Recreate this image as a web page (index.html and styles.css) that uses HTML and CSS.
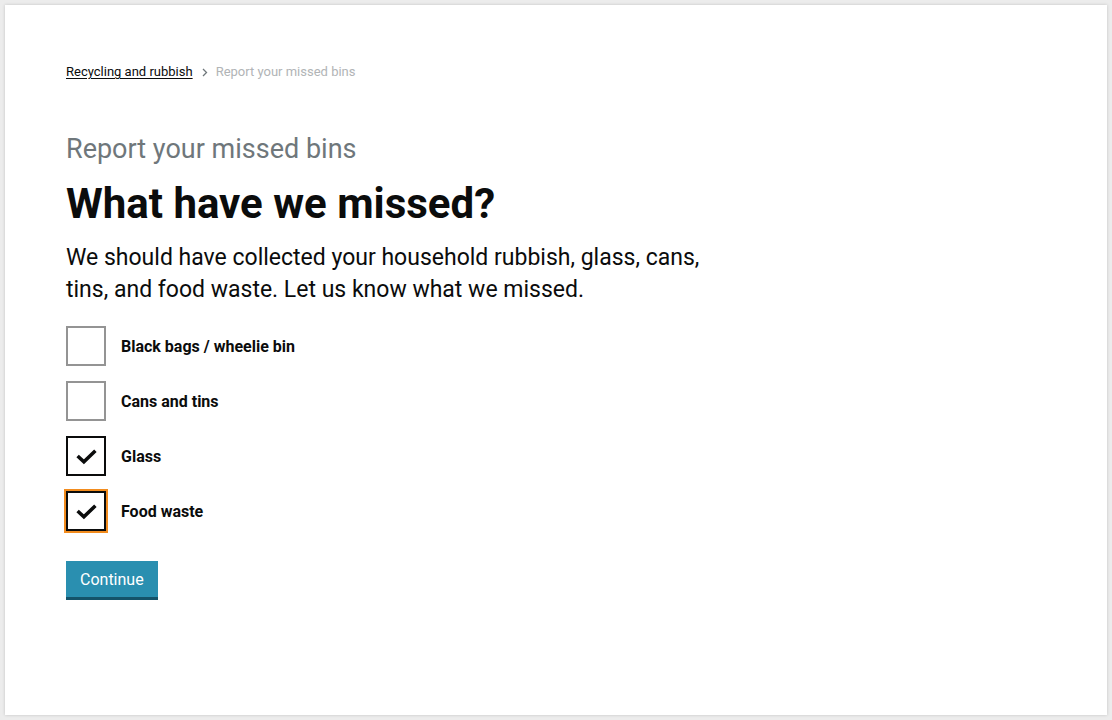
FILE: index.html
```html
<!DOCTYPE html>
<html lang="en">
<head>
<meta charset="utf-8">
<title>What have we missed?</title>
<link rel="stylesheet" href="styles.css">
</head>
<body>
<div class="card">
  <nav class="breadcrumbs">
    <a href="#" class="crumb-link">Recycling and rubbish</a>
    <svg class="chev" width="6" height="9" viewBox="0 0 6 9"><path d="M1 1l3.5 3.5L1 8" fill="none" stroke="#6f777b" stroke-width="1.3"/></svg>
    <span class="crumb-current">Report your missed bins</span>
  </nav>
  <main class="content">
    <p class="caption">Report your missed bins</p>
    <h1 class="heading">What have we missed?</h1>
    <p class="lead">We should have collected your household rubbish, glass, cans, tins, and food waste. Let us know what we missed.</p>
    <div class="options">
      <label class="option"><span class="box"></span><span class="label">Black bags / wheelie bin</span></label>
      <label class="option"><span class="box"></span><span class="label">Cans and tins</span></label>
      <label class="option"><span class="box checked"><svg width="23" height="17" viewBox="0 0 22 16"><path d="M2.5 7.5l6 5.5L19.5 2.5" fill="none" stroke="#0b0c0c" stroke-width="3.4"/></svg></span><span class="label">Glass</span></label>
      <label class="option"><span class="box checked focus"><svg width="23" height="17" viewBox="0 0 22 16"><path d="M2.5 7.5l6 5.5L19.5 2.5" fill="none" stroke="#0b0c0c" stroke-width="3.4"/></svg></span><span class="label">Food waste</span></label>
    </div>
    <button class="btn" type="button">Continue</button>
  </main>
</div>
</body>
</html>
```

FILE: styles.css
```css
* { box-sizing: border-box; }
html, body { margin: 0; padding: 0; }
body {
  background: #ececec;
  font-family: Roboto, "Liberation Sans", Arial, sans-serif;
  color: #0b0c0c;
  padding: 5px 5px 5px 5px;
}
.card {
  background: #fff;
  height: 710px;
  box-shadow: 0 0 3px rgba(0,0,0,0.18);
  padding: 57px 60px 0 61px;
}
.breadcrumbs {
  display: flex;
  align-items: center;
  font-size: 13px;
  line-height: 20px;
}
.crumb-link { color: #0b0c0c; text-decoration: underline; text-underline-offset: 2px; }
.chev { margin: 0 8px 0 9px; }
.crumb-current { color: #b1b4b6; }
.content { padding-top: 51px; }
.caption {
  margin: 0;
  font-size: 27px;
  line-height: 32px;
  color: #6f777b;
}
.heading {
  margin: 13px 0 0;
  font-size: 42px;
  line-height: 52px;
  font-weight: 700;
}
.lead {
  margin: 12px 0 0;
  font-size: 23px;
  line-height: 32px;
  max-width: 660px;
}
.options {
  margin-top: 20px;
  display: flex;
  flex-direction: column;
  gap: 15px;
}
.option {
  display: flex;
  align-items: center;
  gap: 15px;
}
.box {
  width: 40px;
  height: 40px;
  border: 2px solid #949494;
  display: flex;
  align-items: center;
  justify-content: center;
}
.box.checked { border-color: #0b0c0c; }
.box.focus { outline: 2px solid #f28c1e; }
.label { font-size: 16px; font-weight: 700; padding-top: 1px; }
.btn {
  margin-top: 30px;
  background: #2a8fb0;
  color: #fff;
  border: 0;
  border-bottom: 3px solid #14536a;
  font-family: inherit;
  font-size: 16px;
  padding: 2px 14px 0;
  height: 39px;
  line-height: 34px;
}
```
